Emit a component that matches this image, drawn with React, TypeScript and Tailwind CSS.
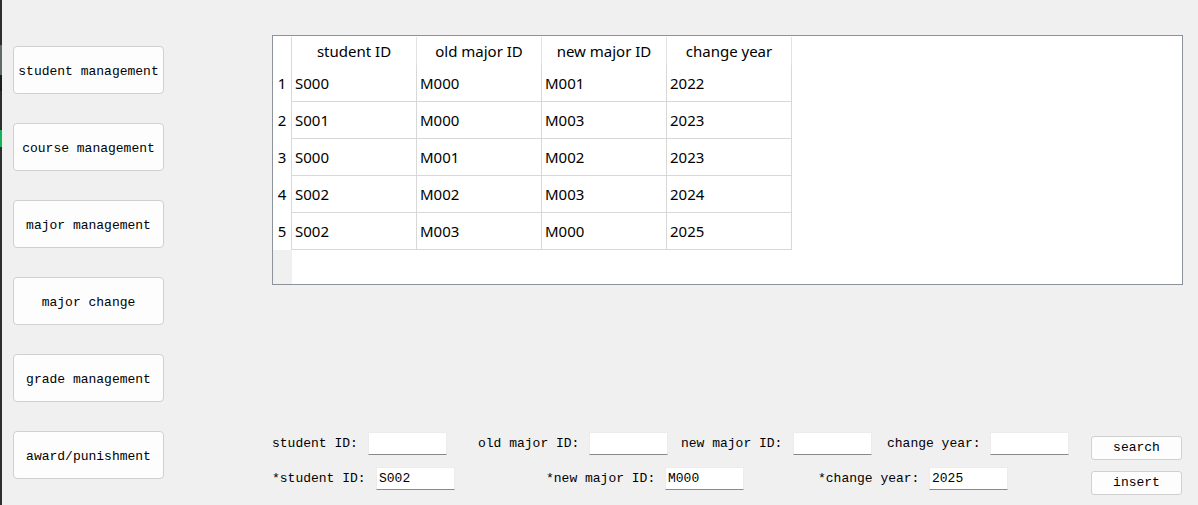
import React from "react";

const NAV = ["student management", "course management", "major management", "major change", "grade management", "award/punishment"];

const HEADERS = ["student ID", "old major ID", "new major ID", "change year"];

const ROWS = [
  ["S000", "M000", "M001", "2022"],
  ["S001", "M000", "M003", "2023"],
  ["S000", "M001", "M002", "2023"],
  ["S002", "M002", "M003", "2024"],
  ["S002", "M003", "M000", "2025"],
];

const mono = "font-['Liberation_Mono','DejaVu_Sans_Mono',monospace] text-[13px] text-black";

function Field({ value = "" }: { value?: string }) {
  return (
    <div className={`w-[79px] h-[23px] bg-white border border-[#ececec] border-b-[#8a8a8a] pl-[2px] leading-[22px] ${mono}`}>
      {value}
    </div>
  );
}

function Btn({ label }: { label: string }) {
  return (
    <button className={`w-[91px] h-[24px] bg-[#fdfdfd] border border-[#d0d0d0] rounded-[3px] leading-[22px] text-center ${mono}`}>
      {label}
    </button>
  );
}

export default function App() {
  return (
    <div className="w-[1198px] h-[505px] bg-[#f0f0f0] flex overflow-hidden">
      {/* window edge behind */}
      <div className="w-[2px] h-full flex flex-col bg-[#2e2e2e]">
        <div className="h-[45px]" />
        <div className="h-[30px] bg-[#5d6b63]" />
        <div className="h-[16px] bg-[#1c1c1c]" />
        <div className="h-[39px]" />
        <div className="h-[17px] bg-[#14b35a]" />
      </div>

      {/* nav */}
      <div className="pl-[11px] pt-[46px] flex flex-col gap-[29px]">
        {NAV.map((n) => (
          <button key={n} className={`w-[151px] h-[48px] pt-[3px] bg-[#fdfdfd] border border-[#d0d0d0] rounded-[4px] text-center whitespace-nowrap ${mono}`}>
            {n}
          </button>
        ))}
      </div>

      <div className="ml-[108px] pt-[35px] flex flex-col">
        {/* table */}
        <div className="w-[911px] h-[250px] bg-white border border-[#8e929a] flex flex-col font-['Noto_Sans','Open_Sans',sans-serif] text-[15px] text-black">
          <div className="flex h-[29px] shrink-0 pt-[1px]">
            <div className="w-[19px] border-r border-[#d8d8d8]" />
            {HEADERS.map((h) => (
              <div key={h} className="w-[125px] border-r border-[#e2e2e2] flex items-center justify-center">
                {h}
              </div>
            ))}
          </div>
          {ROWS.map((r, i) => (
            <div key={i} className="flex h-[37px] shrink-0">
              <div className="w-[19px] border-r border-[#d8d8d8] flex items-center justify-center">{i + 1}</div>
              {r.map((c, j) => (
                <div key={j} className="w-[125px] border-r border-b border-[#d8d8d8] flex items-center pl-[3px]">
                  {c}
                </div>
              ))}
            </div>
          ))}
          <div className="flex-1 flex">
            <div className="w-[19px] bg-[#f0f0f0]" />
          </div>
        </div>

        {/* search / insert form */}
        <div className="mt-[147px] flex items-start h-[25px]">
          <span className={`w-[96px] leading-[24px] ${mono}`}>student ID:</span>
          <Field />
          <span className={`ml-[31px] w-[111px] leading-[24px] ${mono}`}>old major ID:</span>
          <Field />
          <span className={`ml-[13px] w-[112px] leading-[24px] ${mono}`}>new major ID:</span>
          <Field />
          <span className={`ml-[15px] w-[103px] leading-[24px] ${mono}`}>change year:</span>
          <Field />
          <div className="ml-[22px] mt-[1px]">
            <Btn label="search" />
          </div>
        </div>
        <div className="mt-[10px] flex items-start h-[25px]">
          <span className={`w-[104px] leading-[24px] ${mono}`}>*student ID:</span>
          <Field value="S002" />
          <span className={`ml-[91px] w-[119px] leading-[24px] ${mono}`}>*new major ID:</span>
          <Field value="M000" />
          <span className={`ml-[74px] w-[111px] leading-[24px] ${mono}`}>*change year:</span>
          <Field value="2025" />
          <div className="ml-[83px] mt-[1px]">
            <Btn label="insert" />
          </div>
        </div>
      </div>
    </div>
  );
}
